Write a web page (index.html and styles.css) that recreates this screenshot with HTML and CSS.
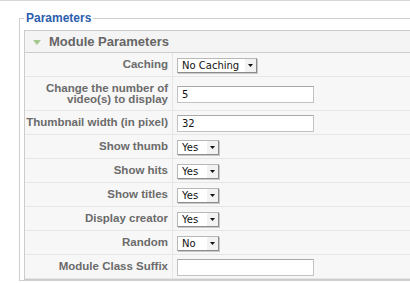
FILE: index.html
```html
<!DOCTYPE html>
<html lang="en">

<head>
    <meta charset="UTF-8">
    <title>Module Parameters</title>
    <link rel="stylesheet" href="styles.css">
</head>

<body>
    <div class="topbar"></div>
    <fieldset class="adminform">
        <legend>Parameters</legend>
        <div class="panel">
            <h3 class="title">
                <svg class="toggler" width="8" height="5" viewBox="0 0 8 5"><polygon points="0,0 8,0 4,5" fill="#a3c98c"/></svg>
                <span>Module Parameters</span>
            </h3>
            <table class="paramlist">
                <tr>
                    <td class="key">Caching</td>
                    <td class="value"><span class="select wide">No Caching<span class="arrow"><svg width="5" height="3" viewBox="0 0 5 3"><polygon points="0,0 5,0 2.5,3" fill="#111"/></svg></span></span></td>
                </tr>
                <tr class="tall">
                    <td class="key">Change the number of<br>video(s) to display</td>
                    <td class="value"><input class="text" type="text" value="5"></td>
                </tr>
                <tr>
                    <td class="key">Thumbnail width (in pixel)</td>
                    <td class="value"><input class="text" type="text" value="32"></td>
                </tr>
                <tr>
                    <td class="key">Show thumb</td>
                    <td class="value"><span class="select short">Yes<span class="arrow"><svg width="5" height="3" viewBox="0 0 5 3"><polygon points="0,0 5,0 2.5,3" fill="#111"/></svg></span></span></td>
                </tr>
                <tr>
                    <td class="key">Show hits</td>
                    <td class="value"><span class="select short">Yes<span class="arrow"><svg width="5" height="3" viewBox="0 0 5 3"><polygon points="0,0 5,0 2.5,3" fill="#111"/></svg></span></span></td>
                </tr>
                <tr>
                    <td class="key">Show titles</td>
                    <td class="value"><span class="select short">Yes<span class="arrow"><svg width="5" height="3" viewBox="0 0 5 3"><polygon points="0,0 5,0 2.5,3" fill="#111"/></svg></span></span></td>
                </tr>
                <tr>
                    <td class="key">Display creator</td>
                    <td class="value"><span class="select short">Yes<span class="arrow"><svg width="5" height="3" viewBox="0 0 5 3"><polygon points="0,0 5,0 2.5,3" fill="#111"/></svg></span></span></td>
                </tr>
                <tr>
                    <td class="key">Random</td>
                    <td class="value"><span class="select short">No<span class="arrow"><svg width="5" height="3" viewBox="0 0 5 3"><polygon points="0,0 5,0 2.5,3" fill="#111"/></svg></span></span></td>
                </tr>
                <tr>
                    <td class="key">Module Class Suffix</td>
                    <td class="value"><input class="text" type="text" value=""></td>
                </tr>
            </table>
        </div>
    </fieldset>
</body>

</html>
```

FILE: styles.css
```css
body {
    margin: 0;
    font-family: "Liberation Sans", Arial, sans-serif;
    background: #fff;
    overflow: hidden;
}

.topbar {
    border-top: 1px solid #d6d6d6;
}

fieldset.adminform {
    box-sizing: border-box;
    width: calc(100% - 19px);
    margin: 10px 0 0 19px;
    padding: 5px 0 0 4px;
    border: 1px solid #cfcfcf;
    border-right: none;
}

fieldset.adminform legend {
    padding: 0 2px;
    font-size: 12px;
    line-height: 14px;
    font-weight: bold;
    color: #2c5eae;
}

.panel {
    border: 1px solid #cccccc;
    border-right: none;
    background: #f7f7f7;
}

.panel .title {
    margin: 0;
    height: 21px;
    padding-left: 8px;
    display: flex;
    align-items: center;
    gap: 8px;
    font-size: 13px;
    color: #666;
    background: #f4f4f4;
    border-bottom: 1px solid #cccccc;
}

.panel .title .toggler {
    margin-top: 1px;
}

.paramlist {
    width: 100%;
    border-collapse: separate;
    border-spacing: 0;
}

.paramlist td {
    box-sizing: border-box;
    height: 24px;
    padding: 0;
    border-bottom: 1px solid #e6e6e6;
}

.paramlist tr.tall td {
    height: 34px;
}

.paramlist td.key {
    width: 148px;
    padding-right: 4px;
    text-align: right;
    font-size: 11.5px;
    line-height: 11px;
    font-weight: bold;
    color: #6b6b6b;
    border-right: 1px solid #e6e6e6;
}

.paramlist td.value {
    padding-left: 4px;
}

.select {
    display: inline-flex;
    align-items: center;
    vertical-align: middle;
    box-sizing: border-box;
    height: 15px;
    padding-left: 4px;
    background: #fff;
    border: 1px solid #b8b8b8;
    border-right-color: #8c8c8c;
    border-bottom-color: #8c8c8c;
    box-shadow: 1px 1px 0 #c9c9c9;
    font-family: "DejaVu Sans", sans-serif;
    font-size: 10px;
    color: #111;
}

.select.wide {
    width: 80px;
}

.select.short {
    width: 42px;
}

.select .arrow {
    margin-left: auto;
    width: 11px;
    height: 100%;
    display: flex;
    align-items: center;
    justify-content: center;
    background: #f2f2f2;
}

.text {
    box-sizing: border-box;
    width: 137px;
    height: 17px;
    padding: 0 4px;
    vertical-align: middle;
    background: #fff;
    border: 1px solid #c2c2c2;
    border-top-color: #a8a8a8;
    font-family: "DejaVu Sans", sans-serif;
    font-size: 10px;
    color: #111;
}
```
